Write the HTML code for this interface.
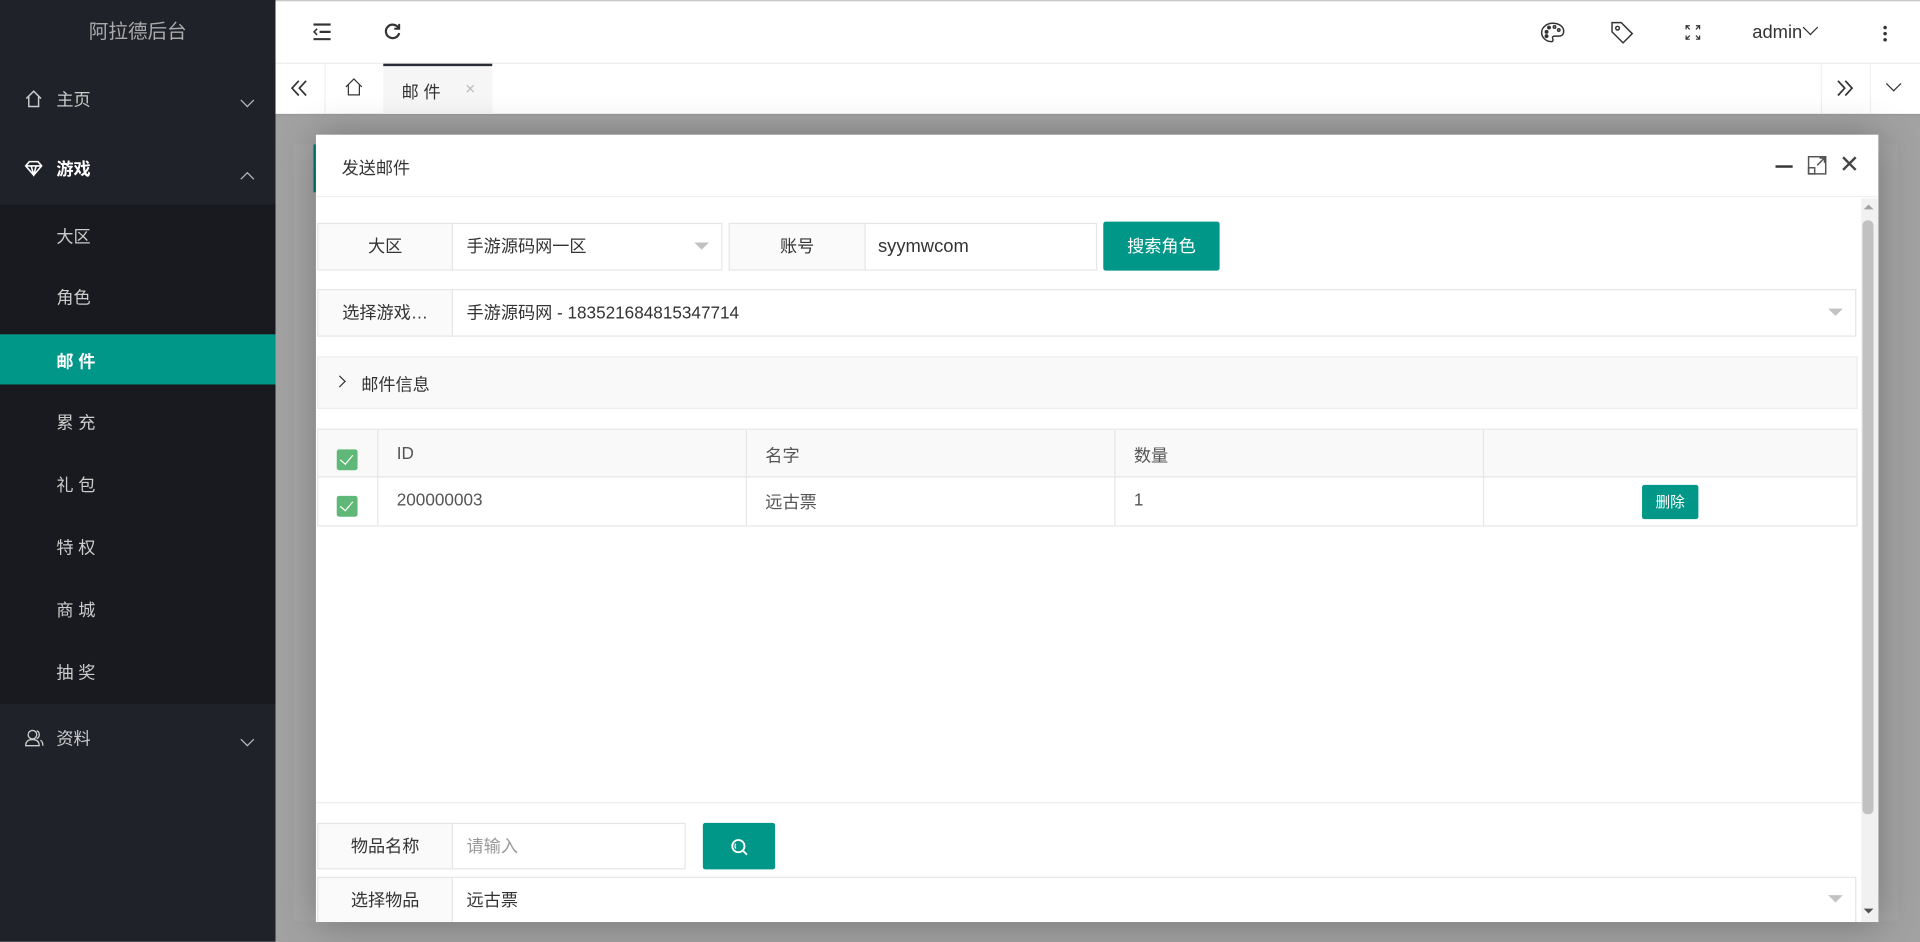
<!DOCTYPE html>
<html><head><meta charset="utf-8"><style>
*{box-sizing:border-box;margin:0;padding:0}
html,body{width:1920px;height:942px;overflow:hidden;background:#a2a2a2}
#w{position:absolute;left:0;top:0;width:1568px;height:769px;transform:scale(1.22449);transform-origin:0 0;font-family:"Liberation Sans","Noto Sans CJK SC",sans-serif;font-size:14px;color:#333}
.a{position:absolute}
.side{left:0;top:0;width:225px;height:769px;background:#20222a}
.mi{position:absolute;left:0;width:225px;color:#ccc;font-size:14px}
.sub{left:0;top:167px;width:225px;height:408px;background:#191a1f}
.si{position:absolute;left:46px;color:#ccc;font-size:14px}
.box{position:absolute;border:1px solid #e6e6e6;background:#fff}
.lab{position:absolute;border:1px solid #e6e6e6;background:#fafafa;text-align:center}
.btn{position:absolute;background:#009688;color:#fff;border-radius:2px;text-align:center}
.tri{position:absolute;width:0;height:0;border-left:6px solid transparent;border-right:6px solid transparent;border-top:6px solid #c2c2c2}
.cb{position:absolute;width:17px;height:17px;background:#5fb878;border-radius:2px}
.cb:after{content:"";position:absolute;left:5px;top:2px;width:5px;height:9px;border:solid #fff;border-width:0 1.5px 1.5px 0;transform:rotate(40deg)}
.chev{position:absolute;width:8px;height:8px;border:solid #bbb;border-width:0 1.5px 1.5px 0}
</style></head><body><div id="w">
<div class="a" style="left:0;top:0;width:1568px;height:1px;background:#c8c8c8"></div>
<div class="a side"></div>
<div class="a" style="left:0;top:0;width:225px;height:52px;color:#aaa;font-size:16px;text-align:center;line-height:54px">阿拉德后台</div>
<div class="mi" style="top:70px;line-height:22px"><svg class="a" style="left:20px;top:3px" width="15" height="15" viewBox="0 0 15 15" fill="none" stroke="#ccc" stroke-width="1.2"><path d="M1.5 7.5L7.5 1.5L13.5 7.5M3.5 6v8h8V6"/></svg><span class="a" style="left:46px">主页</span><div class="chev" style="left:198px;top:8px;transform:rotate(45deg)"></div></div>
<div class="mi" style="top:127px;line-height:22px;color:#fff;font-weight:bold"><svg class="a" style="left:20px;top:4px" width="15" height="13" viewBox="0 0 15 13" fill="none" stroke="#fff" stroke-width="1.3"><path d="M1 4.5L4 1h7l3 3.5L7.5 12zM1 4.5h13M5.5 4.5L7.5 12L9.5 4.5"/></svg><span class="a" style="left:46px">游戏</span><div class="chev" style="left:198px;top:15px;transform:rotate(-135deg)"></div></div>
<div class="a sub"></div>
<div class="si" style="top:183px">大区</div>
<div class="si" style="top:233px">角色</div>
<div class="a" style="left:0;top:273px;width:225px;height:41px;background:#009688"></div>
<div class="si" style="top:285px;color:#fff;font-weight:bold">邮 件</div>
<div class="si" style="top:335px">累 充</div>
<div class="si" style="top:386px">礼 包</div>
<div class="si" style="top:437px">特 权</div>
<div class="si" style="top:488px">商 城</div>
<div class="si" style="top:539px">抽 奖</div>
<div class="mi" style="top:592px;line-height:22px"><svg class="a" style="left:20px;top:3px" width="16" height="15" viewBox="0 0 16 15" fill="none" stroke="#ccc" stroke-width="1.1"><circle cx="6.5" cy="5" r="3.5"/><path d="M1 14c0-4 2.5-5 5.5-5s5.5 1 5.5 5zM10 1.8a3.5 3.5 0 0 1 0 6.4M13 9.5c1.5.8 2 2.5 2 4.5"/></svg><span class="a" style="left:46px">资料</span><div class="chev" style="left:198px;top:8px;transform:rotate(45deg)"></div></div>
<div class="a" style="left:225px;top:1px;width:1343px;height:51px;background:#fff;border-bottom:1px solid #f0f0f0"></div>
<svg class="a" style="left:255px;top:19px" width="16" height="14" viewBox="0 0 16 14" stroke="#333" stroke-width="1.8"><path d="M1 1h14M6 7h9M1 13h14"/><path d="M4 4.5L1.5 7L4 9.5" fill="none" stroke-width="1.3"/></svg>
<svg class="a" style="left:313px;top:18px" width="15" height="15" viewBox="0 0 15 15" fill="none" stroke="#333" stroke-width="1.8"><path d="M12.5 5A5.5 5.5 0 1 0 13 9"/><path d="M13 1.5V5.5H9" stroke-width="1.6"/></svg>
<svg class="a" style="left:1258px;top:18px" width="20" height="17" viewBox="0 0 20 17" fill="none" stroke="#333" stroke-width="1.2"><path d="M10 1C5 1 1 4.5 1 8.5S4.5 16 9 16c1.5 0 1.5-1.5 1-2.5s0-2 1.5-2H15c2.5 0 4-1.5 4-4C19 3.5 15 1 10 1z"/><circle cx="5" cy="8" r="1" fill="#333"/><circle cx="7" cy="4.5" r="1" fill="#333"/><circle cx="11.5" cy="4" r="1"/><circle cx="15" cy="6.5" r="1"/><circle cx="5" cy="11.5" r="1" fill="#333"/></svg>
<svg class="a" style="left:1315px;top:17px" width="20" height="19" viewBox="0 0 20 19" fill="none" stroke="#333" stroke-width="1.2"><path d="M1.5 1.5h7.5l9 9-7.5 7.5-9-9z"/><circle cx="6" cy="6" r="1.5"/></svg>
<svg class="a" style="left:1376px;top:20px" width="13" height="13" viewBox="0 0 13 13" fill="none" stroke="#333" stroke-width="1"><path d="M1 4V1h3M1 1l3 3M12 4V1H9M12 1L9 4M1 9v3h3M1 12l3-3M12 9v3H9M12 12L9 9"/></svg>
<div class="a" style="left:1431px;top:18px;font-size:15px;color:#333">admin</div>
<div class="chev" style="left:1474px;top:18px;border-color:#333;width:9px;height:9px;transform:rotate(45deg)"></div>
<div class="a" style="left:1538px;top:20px;width:3px;height:14px;background:radial-gradient(circle,#333 1.3px,transparent 1.6px) 0 0/3px 5px"></div>
<div class="a" style="left:225px;top:52px;width:1343px;height:41px;background:#fff;box-shadow:0 1px 2px rgba(0,0,0,.1)"></div>
<div class="a" style="left:265px;top:52px;width:1px;height:41px;background:#f0f0f0"></div>
<svg class="a" style="left:237px;top:65px" width="15" height="14" viewBox="0 0 15 14" fill="none" stroke="#333" stroke-width="1.4"><path d="M7 1L1.5 7L7 13M13 1L7.5 7L13 13"/></svg>
<svg class="a" style="left:281px;top:63px" width="16" height="16" viewBox="0 0 16 16" fill="none" stroke="#333" stroke-width="1"><path d="M1.5 8L8 1.5L14.5 8M3.5 6.5v8h9v-8"/></svg>
<div class="a" style="left:313px;top:52px;width:89px;height:41px;background:#f6f6f6;border-top:2px solid #292b34"></div>
<div class="a" style="left:328px;top:65px;font-size:14px">邮 件</div>
<div class="a" style="left:380px;top:64px;font-size:14px;color:#bbb">×</div>
<div class="a" style="left:1487px;top:52px;width:1px;height:41px;background:#f0f0f0"></div>
<div class="a" style="left:1527px;top:52px;width:1px;height:41px;background:#f0f0f0"></div>
<svg class="a" style="left:1499px;top:65px" width="15" height="14" viewBox="0 0 15 14" fill="none" stroke="#333" stroke-width="1.4"><path d="M2 1L7.5 7L2 13M8 1L13.5 7L8 13"/></svg>
<div class="chev" style="left:1542px;top:64px;border-color:#333;width:9px;height:9px;transform:rotate(45deg)"></div>
<div class="a" style="left:240px;top:118px;width:1310px;height:634px;background:#a6a6a6"></div>
<div class="a" style="left:256px;top:118px;width:3px;height:39px;background:#007a6c"></div>
<div class="a" style="left:258px;top:110px;width:1276px;height:643px;background:#fff;box-shadow:1px 1px 30px rgba(0,0,0,.3);overflow:hidden">
 <div class="a" style="left:0;top:0;width:1276px;height:51px;border-bottom:1px solid #f0f0f0"></div>
 <div class="a" style="left:21px;top:17px;font-size:14px">发送邮件</div>
 <div class="a" style="left:1192px;top:25px;width:14px;height:2px;background:#333"></div>
 <svg class="a" style="left:1218px;top:17px" width="16" height="16" viewBox="0 0 16 16" fill="none" stroke="#555" stroke-width="1.2"><rect x="1" y="1" width="14" height="14"/><rect x="1" y="10" width="5" height="5"/><path d="M8 8l6-6M10 2h4v4"/></svg>
 <div class="a" style="left:1244px;top:12px;font-size:20px;color:#444">✕</div>
 <div class="a" style="left:1262px;top:52px;width:14px;height:591px;background:#f1f1f1"></div>
 <div class="a" style="left:1263px;top:70px;width:9px;height:485px;background:#c1c1c1;border-radius:4px"></div>
 <div class="a" style="left:1264px;top:57px;border-left:4px solid transparent;border-right:4px solid transparent;border-bottom:4px solid #a3a3a3"></div>
 <div class="a" style="left:1264px;top:632px;border-left:4px solid transparent;border-right:4px solid transparent;border-top:4px solid #505050"></div>
 <div class="lab" style="left:1px;top:72px;width:111px;height:39px;line-height:37px">大区</div>
 <div class="box" style="left:111px;top:72px;width:221px;height:39px;line-height:37px;padding-left:11px">手游源码网一区</div>
 <div class="tri" style="left:309px;top:88px"></div>
 <div class="lab" style="left:337px;top:72px;width:112px;height:39px;line-height:37px">账号</div>
 <div class="box" style="left:448px;top:72px;width:190px;height:39px;line-height:37px;padding-left:10px;font-size:15px">syymwcom</div>
 <div class="btn" style="left:643px;top:71px;width:95px;height:40px;line-height:40px;font-size:14px">搜索角色</div>
 <div class="lab" style="left:1px;top:126px;width:111px;height:39px;line-height:37px">选择游戏…</div>
 <div class="box" style="left:111px;top:126px;width:1147px;height:39px;line-height:37px;padding-left:11px">手游源码网 - 183521684815347714</div>
 <div class="tri" style="left:1235px;top:142px"></div>
 <div class="a" style="left:1px;top:181px;width:1258px;height:43px;background:#f9f9f9;border:1px solid #ececec"></div>
 <div class="chev" style="left:16px;top:198px;border-color:#333;width:7px;height:7px;transform:rotate(-45deg)"></div>
 <div class="a" style="left:37px;top:194px">邮件信息</div>
 <div class="a" style="left:1px;top:240px;width:1258px;height:80px;border:1px solid #e6e6e6"></div>
 <div class="a" style="left:2px;top:241px;width:1256px;height:39px;background:#f9f9f9;border-bottom:1px solid #e6e6e6"></div>
 <div class="a" style="left:50px;top:241px;width:1px;height:78px;background:#e6e6e6"></div>
 <div class="a" style="left:351px;top:241px;width:1px;height:78px;background:#e6e6e6"></div>
 <div class="a" style="left:652px;top:241px;width:1px;height:78px;background:#e6e6e6"></div>
 <div class="a" style="left:953px;top:241px;width:1px;height:78px;background:#e6e6e6"></div>
 <div class="cb" style="left:17px;top:257px"></div>
 <div class="cb" style="left:17px;top:295px"></div>
 <div class="a" style="left:66px;top:252px;color:#555">ID</div>
 <div class="a" style="left:367px;top:252px;color:#555">名字</div>
 <div class="a" style="left:668px;top:252px;color:#555">数量</div>
 <div class="a" style="left:66px;top:290px;color:#555">200000003</div>
 <div class="a" style="left:367px;top:290px;color:#555">远古票</div>
 <div class="a" style="left:668px;top:290px;color:#555">1</div>
 <div class="btn" style="left:1083px;top:286px;width:46px;height:28px;line-height:28px;font-size:12px">删除</div>
 <div class="a" style="left:0;top:545px;width:1262px;height:1px;background:#eee"></div>
 <div class="lab" style="left:1px;top:562px;width:111px;height:38px;line-height:36px">物品名称</div>
 <div class="box" style="left:111px;top:562px;width:191px;height:38px;line-height:36px;padding-left:11px;color:#999">请输入</div>
 <div class="btn" style="left:316px;top:562px;width:59px;height:38px"><svg style="margin-top:12px" width="16" height="16" viewBox="0 0 16 16" fill="none" stroke="#fff" stroke-width="1.5"><circle cx="7" cy="7" r="5"/><path d="M10.5 10.5L14 14"/><path d="M5 5a3 3 0 0 0 0 4" stroke-width="1"/></svg></div>
 <div class="lab" style="left:1px;top:606px;width:111px;height:40px;line-height:36px">选择物品</div>
 <div class="box" style="left:111px;top:606px;width:1147px;height:40px;line-height:36px;padding-left:11px">远古票</div>
 <div class="tri" style="left:1235px;top:621px"></div>
</div>
</div></body></html>
